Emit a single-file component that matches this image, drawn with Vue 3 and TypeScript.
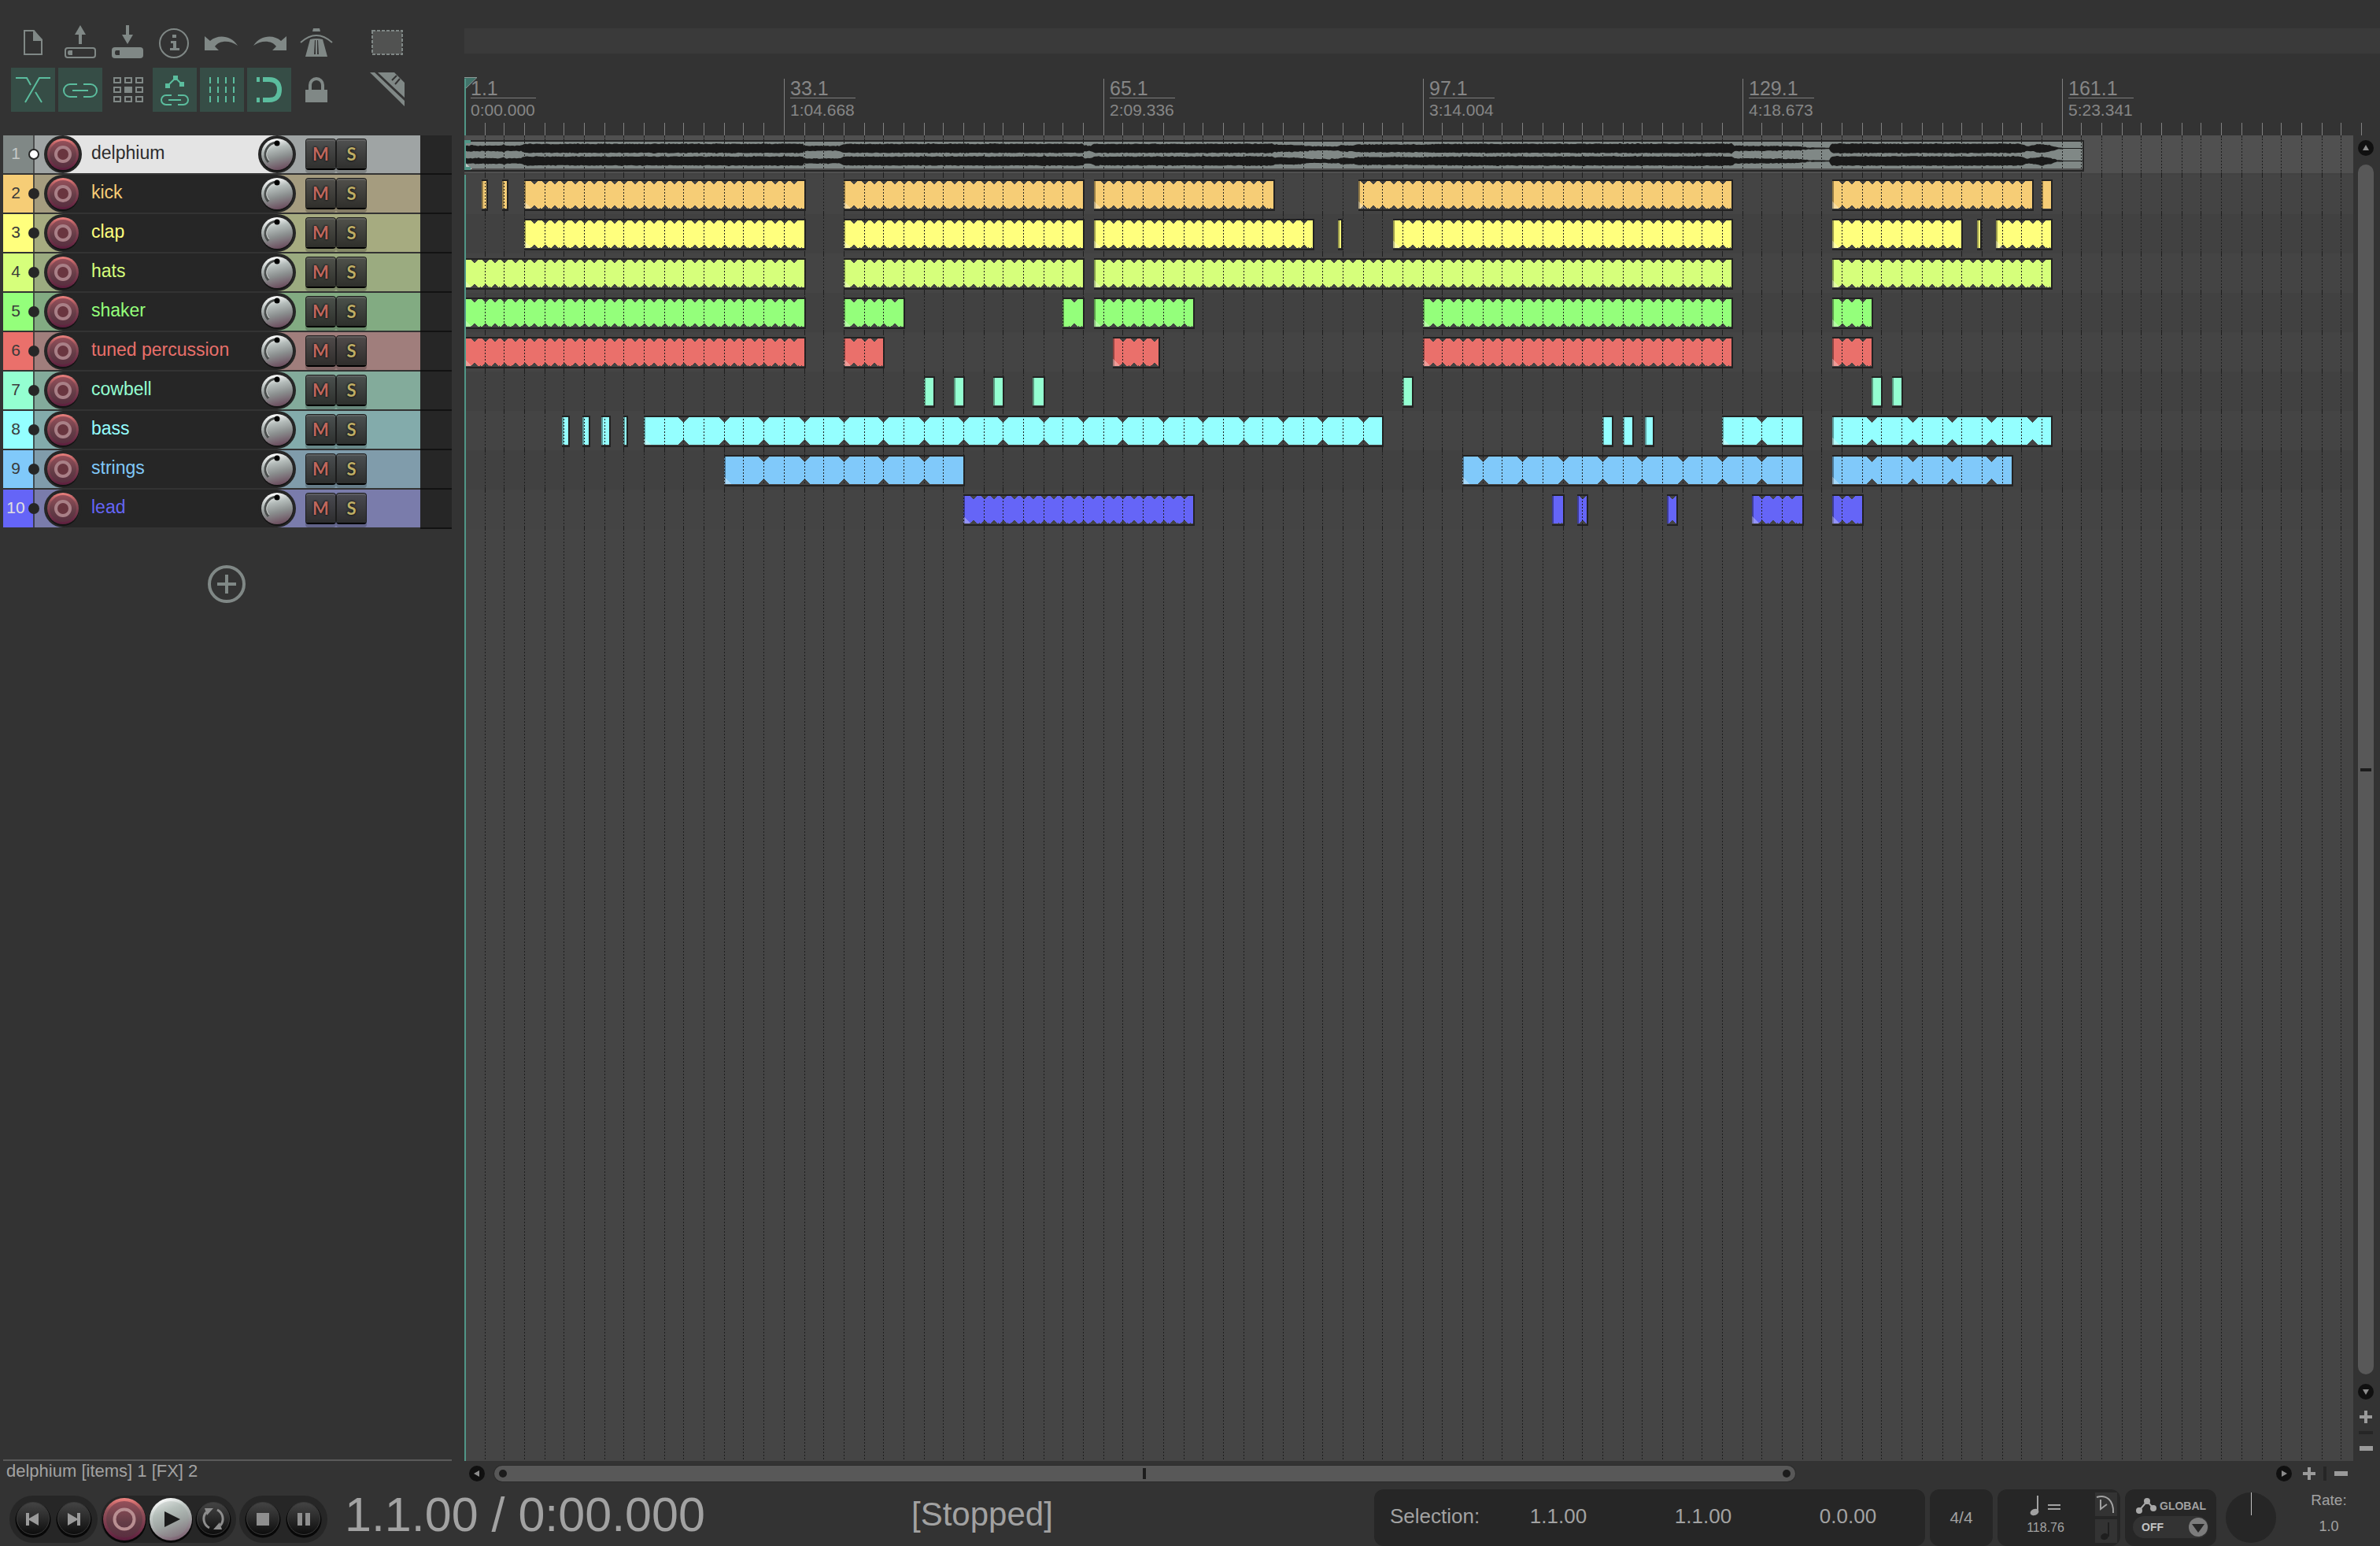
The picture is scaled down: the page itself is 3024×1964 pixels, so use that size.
<script setup lang="ts">
import { computed, ref } from 'vue'

type Clip = [start: number, end: number]

interface Track {
  name: string
  color: string
  body: string
  every: number
  phase: number
  clips: Clip[]
}

const tracks: Track[] = [
  { name: 'delphium', color: '#808886', body: '#9fa4a4', every: 0, phase: 0, clips: [] },
  {
    name: 'kick', color: '#f6cd76', body: '#a59c7f', every: 1, phase: 0,
    clips: [[1.75, 2.25], [3.8, 4.3], [6, 34], [38, 62], [63.02, 81], [89.5, 127], [137, 157], [158, 159]],
  },
  {
    name: 'clap', color: '#ffff7d', body: '#a6ab80', every: 1, phase: 0,
    clips: [[6, 34], [38, 62], [63.02, 85], [87.5, 87.9], [93, 127], [137, 150], [151.5, 151.9], [153.4, 159]],
  },
  {
    name: 'hats', color: '#d6ff7b', body: '#9bab80', every: 1, phase: 0,
    clips: [[0, 34], [38, 62], [63.02, 127], [137, 159]],
  },
  {
    name: 'shaker', color: '#94ff7b', body: '#82ab82', every: 1, phase: 0,
    clips: [[0, 34], [38, 44], [60, 62], [63.02, 73], [96, 127], [137, 141]],
  },
  {
    name: 'tuned percussion', color: '#ea706b', body: '#a07e7c', every: 1, phase: 0,
    clips: [[0, 34], [38, 42], [65, 69.5], [96, 127], [137, 141]],
  },
  {
    name: 'cowbell', color: '#94ffd1', body: '#83ab9b', every: 0, phase: 0,
    clips: [[46, 47], [49, 50], [53, 54], [57, 58], [94, 95], [141, 142], [143, 144]],
  },
  {
    name: 'bass', color: '#94ffff', body: '#83abab', every: 4, phase: 2,
    clips: [[9.8, 10.5], [11.8, 12.5], [13.8, 14.5], [15.9, 16.2], [18, 92], [114, 115], [116, 117], [118.25, 119], [126, 134], [137, 159]],
  },
  {
    name: 'strings', color: '#80c9fa', body: '#809cab', every: 4, phase: 2,
    clips: [[26, 50], [100, 134], [137, 155]],
  },
  {
    name: 'lead', color: '#6565f7', body: '#7a7cab', every: 1, phase: 0,
    clips: [[50, 73], [109, 110], [111.5, 112.4], [120.5, 121.5], [129, 134], [137, 140]],
  },
]

/* Bars are snapped to even device pixels so the grid stays crisp. */
const HALF_BAR = 6.34225
const barX = (bar: number): number => 2 * Math.floor(bar * HALF_BAR + 0.4)

const gridBars = Array.from({ length: 110 }, (_, i) => (i + 1) * 2)
const gridPath = gridBars.map((b) => `M${barX(b) + 0.5} 0V4000`).join('')
const lanePath = gridBars.map((b) => `M${barX(b) + 0.5} 0V500`).join('')
const tickPath = gridBars.filter((b) => b % 32 !== 0).map((b) => `M${barX(b) + 0.5} 60V76`).join('')

const marks = [
  { bar: 0, label: '1.1', time: '0:00.000' },
  { bar: 32, label: '33.1', time: '1:04.668' },
  { bar: 64, label: '65.1', time: '2:09.336' },
  { bar: 96, label: '97.1', time: '3:14.004' },
  { bar: 128, label: '129.1', time: '4:18.673' },
  { bar: 160, label: '161.1', time: '5:23.341' },
]

interface ClipShape {
  x: number
  w: number
  notches: string
  fade: boolean
  texture: boolean
}

function shapes(track: Track): ClipShape[] {
  const half = track.every === 4 ? 6 : 4
  const depth = track.every === 4 ? 7 : 4
  /* The bass part that starts at bar 137 and the strings there loop from their own start. */
  return track.clips.map(([start, end]) => {
    const x = barX(start)
    const w = barX(end) - x
    let notches = ''
    if (track.every) {
      const phase = track.every === 4 && start === 137 ? 1 : track.phase
      for (let bar = Math.ceil(start + 0.01); bar < end; bar++) {
        if (bar % track.every !== phase % track.every) continue
        if (bar - start < 0.4 || w < 12) continue
        const n = barX(bar)
        notches += `M${n - half} 8h${half * 2 + 1}l${-half} ${depth}h-1z`
        notches += `M${n - half} 43h${half * 2 + 1}l${-half} ${-depth}h-1z`
      }
    }
    return { x, w, notches, fade: w > 28, texture: track.every === 1 && w > 12 }
  })
}

const lanes = tracks.slice(1).map((t) => ({ track: t, clips: shapes(t) }))

/* Loudness envelope of the audio item: [x, amplitude]. */
const envelope: [number, number][] = [
  [0, 3.8], [46, 4], [50, 5], [54, 3.6], [72, 4], [76, 6], [430, 6.2], [432, 3.6], [476, 3.6], [482, 6],
  [786, 6.2], [788, 3.8], [797, 3.8], [799, 6], [1026, 6.2], [1030, 5], [1060, 4.6], [1078, 3], [1110, 3], [1114, 4.6],
  [1130, 4], [1134, 5.4], [1220, 5.4], [1240, 6], [1611, 6.3], [1614, 3.8], [1694, 3], [1716, 1], [1734, 0.8],
  [1737, 6.4], [1978, 6.2], [1986, 3.4], [2004, 5.8], [2014, 4.6], [2024, 1.6], [2032, 0.6], [2056, 0.6],
]

function amp(x: number): number {
  for (let i = 1; i < envelope.length; i++) {
    const [x0, a0] = envelope[i - 1]
    const [x1, a1] = envelope[i]
    if (x <= x1) return a0 + ((a1 - a0) * (x - x0)) / (x1 - x0)
  }
  return 0.5
}

function wave(center: number, seed: number): string {
  let s = seed
  const rnd = (): number => {
    s = (s * 1103515245 + 12345) % 2147483648
    return s / 2147483648
  }
  const top: string[] = []
  const bottom: string[] = []
  for (let x = 2; x <= 2056; x += 2) {
    const a = amp(x)
    const jitter = a > 1.2 ? 0.9 : 0
    const peak = rnd() > 0.9 ? 1 : 0
    top.push(`${x},${(center - a - peak * (jitter ? 0.6 : 0) + rnd() * jitter).toFixed(1)}`)
    bottom.unshift(`${x},${(center + a + peak * (jitter ? 0.6 : 0) - rnd() * jitter).toFixed(1)}`)
  }
  return [...top, ...bottom].join(' ')
}

const waveTop = wave(16.5, 7)
const waveBottom = wave(32.5, 91)

const selection = ref(['1.1.00', '1.1.00', '0.0.00'])
const signature = ref('4/4')
const tempo = ref('118.76')
const rate = ref('1.0')
const mode = ref('OFF')
const selected = ref(0)
const status = computed(() => `${tracks[selected.value].name} [items] 1 [FX] 2`)
</script>

<template>
  <div class="daw">
    <svg class="defs" width="0" height="0" aria-hidden="true">
      <defs>
        <linearGradient id="recFill" x1="0" y1="0" x2="0" y2="1">
          <stop offset="0" stop-color="#ee8480" />
          <stop offset=".14" stop-color="#c8686a" />
          <stop offset=".3" stop-color="#93525a" />
          <stop offset="1" stop-color="#5c1f3e" />
        </linearGradient>
        <linearGradient id="recInner" x1="0" y1="0" x2="0" y2="1">
          <stop offset="0" stop-color="#94505a" />
          <stop offset=".6" stop-color="#633c46" />
          <stop offset="1" stop-color="#5a2f40" />
        </linearGradient>
        <linearGradient id="knobFill" x1=".4" y1="0" x2=".65" y2="1">
          <stop offset="0" stop-color="#ffffff" />
          <stop offset=".3" stop-color="#b4bcba" />
          <stop offset=".6" stop-color="#8a8e8e" />
          <stop offset="1" stop-color="#6a4a5c" />
        </linearGradient>
        <linearGradient id="playFill" x1=".3" y1="0" x2=".7" y2="1">
          <stop offset="0" stop-color="#ffffff" />
          <stop offset=".3" stop-color="#c2cac6" />
          <stop offset=".6" stop-color="#a3a5a5" />
          <stop offset="1" stop-color="#7a5c6e" />
        </linearGradient>
        <linearGradient id="blackFill" x1="0" y1="0" x2="0" y2="1">
          <stop offset="0" stop-color="#444444" />
          <stop offset=".5" stop-color="#2a2a2a" />
          <stop offset="1" stop-color="#0c0c0c" />
        </linearGradient>
      </defs>
    </svg>

    <div class="workspace">
      <aside class="panel">
        <div class="toolbar">
          <div class="tools">
            <button class="tool" aria-label="New project">
              <svg viewBox="0 0 56 56"><path class="ln" d="M17 13H29L39 25V43H17Z" /><path class="fl" d="M28 12L40 24V26H28Z" /></svg>
            </button>
            <button class="tool" aria-label="Open project">
              <svg viewBox="0 0 56 56"><path class="fl" d="M28 6L35 18H30V30H26V18H21Z" /><rect class="ln" x="9" y="35" width="38" height="12" rx="3" /><path class="fl" d="M14 38H18V44H14Q12 44 12 41T14 38Z" /></svg>
            </button>
            <button class="tool" aria-label="Save project">
              <svg viewBox="0 0 56 56"><path class="fl" d="M28 30L35 18H30V6H26V18H21Z" /><rect class="fl" x="8" y="34" width="40" height="14" rx="4" /><path class="bg" d="M14 38H18V44H14Q12 44 12 41T14 38Z" /></svg>
            </button>
            <button class="tool" aria-label="Project settings">
              <svg viewBox="0 0 56 56"><circle class="ln" cx="27" cy="29" r="18" /><path class="fl" d="M25 18h5v4h-5zM23 26h7v9h4v3H22v-3h4v-6h-3z" /></svg>
            </button>
            <button class="tool" aria-label="Undo">
              <svg viewBox="0 0 56 56"><path class="fl" d="M6 20L13 26C22 18 39 18 48 32C38 25 25 25 19 33L24 38H6Z" /></svg>
            </button>
            <button class="tool" aria-label="Redo">
              <svg viewBox="0 0 56 56"><path class="fl" d="M50 20L43 26C34 18 17 18 8 32C18 25 31 25 37 33L32 38H50Z" /></svg>
            </button>
            <button class="tool" aria-label="Metronome">
              <svg viewBox="0 0 56 56"><path class="fl" d="M24 10H32L33 14H23Z" /><path class="ln" d="M8 28Q18 19 28 19T48 28" /><path class="fl" d="M20 24Q28 22 36 24L42 46H14Z" /><path class="bg" d="M26 25H30L31 43H25Z" /><path class="fl" d="M27 25H29V43H27Z" /></svg>
            </button>
            <button class="tool far" aria-label="Marquee selection">
              <svg viewBox="0 0 56 56"><rect x="9" y="13" width="38" height="30" fill="#515251" stroke="#808886" stroke-width="2" stroke-dasharray="4 2" /></svg>
            </button>
          </div>
          <div class="tools">
            <button class="tool on" aria-label="Auto crossfade">
              <svg viewBox="0 0 56 56"><path class="ln" d="M6 13H20L25 22M50 13H36L18 44M31 31L39 44" /></svg>
            </button>
            <button class="tool on" aria-label="Item grouping">
              <svg viewBox="0 0 56 56"><path class="ln" d="M24 21H15A8 8 0 0 0 15 37H24M32 21H41A8 8 0 0 1 41 37H32M18 29H38" /></svg>
            </button>
            <button class="tool" aria-label="Ripple editing">
              <svg viewBox="0 0 56 56"><path class="ln" d="M11 13h8v6h-8zM25 13h8v6h-8zM39 13h8v6h-8zM11 25h8v6h-8zM39 25h8v6h-8zM11 37h8v6h-8zM25 37h8v6h-8zM39 37h8v6h-8z" /><path class="fl" d="M24 24h10v8H24z" /></svg>
            </button>
            <button class="tool on" aria-label="Move envelopes with items">
              <svg viewBox="0 0 56 56"><path class="fl" d="M26 10h6v6h-6zM16 20h6v6h-6zM34 18h6v6h-6z" /><path class="ln" d="M19 23L29 13L37 21M24 35H17A6 6 0 0 0 17 47H24M32 35H39A6 6 0 0 1 39 47H32M20 41H36" /></svg>
            </button>
            <button class="tool on" aria-label="Grid lines">
              <svg viewBox="0 0 56 56"><path class="ln" d="M13 12V44M23 12V44M33 12V44M43 12V44" stroke-dasharray="8 4" /></svg>
            </button>
            <button class="tool on" aria-label="Snap">
              <svg viewBox="0 0 56 56"><path d="M20 15H28C37 15 41 20 41 28S37 41 28 41H20" fill="none" stroke="#5bbd9e" stroke-width="6" /><path class="fl" d="M12 12h4v6h-4zM12 38h4v6h-4z" /></svg>
            </button>
            <button class="tool" aria-label="Locking">
              <svg viewBox="0 0 56 56"><path class="fl" d="M14 28H42V44H14Z" /><path d="M20 28V22A8 8 0 0 1 36 22V28" fill="none" stroke="#808886" stroke-width="4" /></svg>
            </button>
            <button class="tool far" aria-label="Ruler options">
              <svg viewBox="0 0 56 56"><path class="fl" d="M6 6H12L50 42V49ZM16 6H37L50 19V38Z" /><path d="M34 16L40 10M38 21L44 14" fill="none" stroke="#333" stroke-width="2" /></svg>
            </button>
          </div>
        </div>

        <ul class="tracks">
          <li v-for="(t, i) in tracks" :key="t.name" class="track" :class="{ sel: i === selected }">
            <span class="num" :class="{ pale: i === 0 || i === 9 }" :style="{ background: t.color }">{{ i + 1 }}</span>
            <div class="body" :style="{ background: t.body }">
              <i class="node"></i>
              <div class="strip">
                <button class="round" :aria-label="`Record arm ${t.name}`">
                  <svg viewBox="0 0 48 48">
                    <circle cx="24" cy="24" r="24" fill="#262626" />
                    <circle cx="24" cy="26" r="20" fill="#141414" />
                    <circle cx="24" cy="24" r="20" fill="url(#recFill)" />
                    <circle cx="24" cy="24" r="17" fill="url(#recInner)" />
                    <circle cx="24" cy="24" r="9" fill="#69353f" stroke="#a98087" stroke-width="4" />
                  </svg>
                </button>
                <span class="name" :style="{ color: i === selected ? '#2c2c2c' : t.color }">{{ t.name }}</span>
                <button class="round" :aria-label="`Volume ${t.name}`">
                  <svg viewBox="0 0 48 48">
                    <circle cx="24" cy="24" r="24" fill="#262626" />
                    <circle cx="24" cy="26" r="20" fill="#141414" />
                    <circle cx="24" cy="24" r="20" fill="url(#knobFill)" />
                    <path d="M24 9A15 15 0 0 0 13 34" fill="none" stroke="#4a4e4d" stroke-width="3" />
                    <path d="M24 12A12 12 0 0 0 14 32" fill="none" stroke="#cfd4d2" stroke-width="1" />
                    <circle cx="24" cy="10" r="3.5" fill="#000" />
                  </svg>
                </button>
              </div>
              <div class="ms">
                <button class="key mute" :aria-label="`Mute ${t.name}`">M</button>
                <button class="key solo" :aria-label="`Solo ${t.name}`">S</button>
              </div>
            </div>
            <div class="meter"></div>
          </li>
        </ul>

        <button class="add" aria-label="Add track">
          <svg viewBox="0 0 48 48"><circle cx="24" cy="24" r="22" /><path d="M12 24H36M24 12V36" /></svg>
        </button>
        <p class="status">{{ status }}</p>
      </aside>

      <main class="arrange">
        <div class="regions"></div>
        <svg class="ruler" width="100%" height="76">
          <path :d="tickPath" stroke="#808080" />
          <template v-for="m in marks" :key="m.bar">
            <path v-if="m.bar" :d="`M${barX(m.bar) + 0.5} 4V76`" stroke="#808080" />
            <path :d="`M${barX(m.bar) + 8} 28.5h83`" stroke="#7c7c7c" />
            <text class="bar" :x="barX(m.bar) + 8" y="25">{{ m.label }}</text>
            <text class="time" :x="barX(m.bar) + 8" y="51">{{ m.time }}</text>
          </template>
          <path d="M0 2H16L1 17Z" fill="#41736a" />
          <path d="M0 2.5H16L1 17" fill="none" stroke="#8b9a97" />
          <path d="M0 4H2V76H0Z" fill="#519687" />
        </svg>

        <div class="view">
          <div class="timeline">
            <svg class="lane first" width="100%" height="50">
              <rect x="0" y="6" width="2058" height="40" fill="#262626" />
              <rect x="0" y="8" width="2056" height="34" fill="#808886" />
              <rect x="0" y="42" width="2056" height="2" fill="#505050" />
              <polygon :points="waveTop" fill="#1a1a1a" />
              <polygon :points="waveBottom" fill="#1a1a1a" />
              <path d="M0 34L10 43H0Z" fill="#c4c8c7" />
              <path d="M0 6H8V10H2V40H8V44H0Z" fill="#519687" />
            </svg>
            <svg v-for="lane in lanes" :key="lane.track.name" class="lane" width="100%" height="50" shape-rendering="crispEdges">
              <g v-for="c in lane.clips" :key="c.x">
                <rect :x="c.x" y="6" :width="c.w + 2" height="40" fill="#222222" />
                <rect :x="c.x" y="8" :width="c.w" height="36" fill="#444444" />
                <rect :x="c.x" y="8" :width="c.w" height="35" :fill="lane.track.color" />
                <path :d="c.notches" fill="#444444" />
                <path v-if="c.texture" :d="`M${c.x + 8} 42.5h${c.w - 8}`" stroke="#444444" stroke-dasharray="1 3" />
                <rect v-if="c.x" :x="c.x" y="8" width="2" height="35" fill="#000" opacity=".4" />
                <path v-if="c.fade" :d="`M${c.x} 34L${c.x + 9} 43H${c.x}Z`" fill="#fff" opacity=".3" />
              </g>
            </svg>
            <svg class="grid" width="100%" height="100%" aria-hidden="true">
              <path :d="gridPath" stroke="#1e1e1e" stroke-dasharray="2 2" fill="none" />
              <path :d="lanePath" stroke="#1e1e1e" stroke-dasharray="3 44 3 0" fill="none" />
            </svg>
            <i class="playhead"></i>
          </div>
          <div class="vbar">
            <button class="dot" aria-label="Scroll up"><svg viewBox="0 0 20 20"><path d="M10 6L14 13H6Z" /></svg></button>
            <div class="vthumb"><i></i></div>
            <button class="dot" aria-label="Scroll down"><svg viewBox="0 0 20 20"><path d="M10 14L14 7H6Z" /></svg></button>
            <button class="zoom" aria-label="Zoom in vertically"><svg viewBox="0 0 20 20"><path d="M8 2h4v6h6v4h-6v6H8v-6H2V8h6z" /></svg></button>
            <i class="sep"></i>
            <button class="zoom" aria-label="Zoom out vertically"><svg viewBox="0 0 20 20"><path d="M2 7h17v6H2z" /></svg></button>
          </div>
        </div>

        <div class="hbar">
          <button class="dot" aria-label="Scroll left"><svg viewBox="0 0 20 20"><path d="M6 10L13 6V14Z" /></svg></button>
          <div class="htrack">
            <div class="hthumb"><i></i></div>
          </div>
          <button class="dot" aria-label="Scroll right"><svg viewBox="0 0 20 20"><path d="M14 10L7 6V14Z" /></svg></button>
          <button class="zoom" aria-label="Zoom in horizontally"><svg viewBox="0 0 20 20"><path d="M8 2h4v6h6v4h-6v6H8v-6H2V8h6z" /></svg></button>
          <i class="sep"></i>
          <button class="zoom" aria-label="Zoom out horizontally"><svg viewBox="0 0 20 20"><path d="M2 7h17v6H2z" /></svg></button>
        </div>
      </main>
    </div>

    <footer class="transport">
      <div class="pill">
        <button class="small" aria-label="Go to start">
          <svg viewBox="0 0 46 46"><circle cx="23" cy="24" r="22.5" fill="#080808" /><circle cx="23" cy="22" r="20.5" fill="url(#blackFill)" stroke="#3a3a3a" /><path fill="#9a9a9a" d="M14 15h4v7l12-7v16l-12-7v7h-4z" /></svg>
        </button>
        <button class="small" aria-label="Go to end">
          <svg viewBox="0 0 46 46"><circle cx="23" cy="24" r="22.5" fill="#080808" /><circle cx="23" cy="22" r="20.5" fill="url(#blackFill)" stroke="#3a3a3a" /><path fill="#9a9a9a" d="M31 15h-4v7l-12-7v16l12-7v7h4z" /></svg>
        </button>
      </div>
      <div class="pill mid">
        <button class="large" aria-label="Record">
          <svg viewBox="0 0 56 56"><circle cx="28" cy="30" r="28" fill="#080808" /><circle cx="28" cy="28" r="27" fill="url(#recFill)" /><circle cx="28" cy="28" r="23" fill="url(#recInner)" /><circle cx="28" cy="28" r="12.5" fill="none" stroke="#b98f92" stroke-width="4" /></svg>
        </button>
        <button class="large" aria-label="Play">
          <svg viewBox="0 0 56 56"><circle cx="28" cy="30" r="28" fill="#080808" /><circle cx="28" cy="28" r="27" fill="url(#playFill)" /><circle cx="28" cy="28" r="23" fill="#8a9a92" opacity=".25" /><path fill="#1c1c1c" d="M20 18L40 28L20 38Z" /></svg>
        </button>
        <button class="small" aria-label="Repeat">
          <svg viewBox="0 0 46 46"><circle cx="23" cy="24" r="22.5" fill="#080808" /><circle cx="23" cy="22" r="20.5" fill="url(#blackFill)" stroke="#3a3a3a" /><path fill="none" stroke="#8e8e8e" stroke-width="3" d="M18 34A13 13 0 0 1 14 14M28 11A13 13 0 0 1 32 31" /><path fill="#8e8e8e" d="M12 9h11l-8 9zM34 36H23l8-9z" /></svg>
        </button>
      </div>
      <div class="pill">
        <button class="small" aria-label="Stop">
          <svg viewBox="0 0 46 46"><circle cx="23" cy="24" r="22.5" fill="#080808" /><circle cx="23" cy="22" r="20.5" fill="url(#blackFill)" stroke="#3a3a3a" /><path fill="#8e8e8e" d="M15 15h16v16H15z" /></svg>
        </button>
        <button class="small" aria-label="Pause">
          <svg viewBox="0 0 46 46"><circle cx="23" cy="24" r="22.5" fill="#080808" /><circle cx="23" cy="22" r="20.5" fill="url(#blackFill)" stroke="#3a3a3a" /><path fill="#8e8e8e" d="M15 15h6v16h-6zM25 15h6v16h-6z" /></svg>
        </button>
      </div>

      <output class="clock">1.1.00 / 0:00.000</output>
      <output class="state">[Stopped]</output>

      <div class="box selection">
        <label for="sel0">Selection:</label>
        <input v-for="(_, i) in selection" :id="`sel${i}`" :key="i" v-model="selection[i]" type="text" aria-label="Selection" />
      </div>
      <div class="box signature">
        <input v-model="signature" type="text" aria-label="Time signature" />
      </div>
      <div class="box tempo">
        <div class="bpm">
          <label for="bpm" aria-label="Tempo">
            <svg viewBox="0 0 40 26" width="40" height="26"><ellipse cx="6" cy="21" rx="5.5" ry="4" fill="#a2a2a2" transform="rotate(-20 6 21)" /><path d="M10 0V21" stroke="#a2a2a2" stroke-width="2" /><path d="M23 12H39M23 17H39" stroke="#a2a2a2" stroke-width="2" /></svg>
          </label>
          <input id="bpm" v-model="tempo" type="text" />
        </div>
        <div class="marks">
          <button aria-label="Tempo envelope"><svg viewBox="0 0 28 30"><path d="M2 6C14 2 24 10 23 26" fill="none" stroke="#a2a2a2" stroke-width="2" /><path d="M7 9V21L15 15" fill="none" stroke="#a2a2a2" stroke-width="2" /></svg></button>
          <button aria-label="Tap tempo"><svg viewBox="0 0 28 30"><ellipse cx="12" cy="22" rx="5" ry="4" fill="#1f1f1f" transform="rotate(-20 12 22)" /><path d="M17 4V22" stroke="#1f1f1f" stroke-width="2" /></svg></button>
        </div>
      </div>
      <div class="box global">
        <label for="mode">
          <svg viewBox="0 0 26 22" width="26" height="22"><path d="M4 17L14 5L22 14" fill="none" stroke="#a8a8a8" stroke-width="2" /><circle cx="4" cy="17" r="4" /><circle cx="14" cy="5" r="4" /><circle cx="22" cy="14" r="4" /></svg>
          GLOBAL
        </label>
        <div class="drop">
          <select id="mode" v-model="mode">
            <option>OFF</option>
            <option>READ</option>
            <option>TOUCH</option>
          </select>
          <svg viewBox="0 0 24 24" width="24" height="24"><circle cx="12" cy="12" r="12" fill="#7c7c7c" /><path d="M4 8H20L12 19Z" fill="#262626" /></svg>
        </div>
      </div>
      <button class="dial" aria-label="Playback rate"><i></i></button>
      <div class="rate">
        <label for="rate">Rate:</label>
        <input id="rate" v-model="rate" type="text" />
      </div>
    </footer>
  </div>
</template>

<style>
body {
  margin: 0;
  background: #333333;
}
</style>

<style scoped>
.daw {
  display: flex;
  flex-direction: column;
  height: 100vh;
  overflow: hidden;
  background: #333333;
  color: #a2a2a2;
  font-family: "Liberation Sans", Arial, Helvetica, sans-serif;
}
.defs {
  position: absolute;
}
button,
input,
select {
  margin: 0;
  padding: 0;
  border: 0;
  background: none;
  color: inherit;
  font-family: inherit;
  appearance: none;
}
button svg {
  display: block;
  width: 100%;
  height: 100%;
}
.workspace {
  flex: 1;
  min-height: 0;
  display: flex;
}

/* track control panel */
.panel {
  flex: none;
  width: 590px;
  display: flex;
  flex-direction: column;
}
.toolbar {
  display: flex;
  flex-direction: column;
  gap: 4px;
  padding: 26px 14px 30px;
}
.tools {
  display: flex;
  gap: 4px;
}
.tool {
  width: 56px;
  height: 56px;
}
.tool.far {
  margin-left: 30px;
}
.tool .ln {
  fill: none;
  stroke: #808886;
  stroke-width: 2;
}
.tool .fl {
  fill: #808886;
}
.tool .bg {
  fill: #333333;
}
.tool.on {
  background: #364d46;
}
.tool.on .ln {
  stroke: #5bbd9e;
}
.tool.on .fl {
  fill: #5bbd9e;
}
.tracks {
  list-style: none;
  margin: 0 16px 0 4px;
  padding: 0;
}
.track {
  display: flex;
  height: 50px;
}
.num {
  width: 38px;
  height: 48px;
  box-sizing: border-box;
  padding-right: 6px;
  line-height: 45px;
  font-size: 21px;
  text-align: center;
  color: #3a3a3a;
}
.num.pale {
  color: #e0e0e0;
}
.sel .num.pale {
  color: #c4c8c6;
}
.body {
  position: relative;
  flex: 1;
  height: 48px;
  display: flex;
  align-items: center;
  border-left: 2px solid rgba(20, 20, 20, 0.6);
  padding-left: 12px;
}
.node {
  position: absolute;
  left: -8px;
  top: 17px;
  width: 14px;
  height: 14px;
  border-radius: 50%;
  background: #262626;
}
.sel .node {
  width: 10px;
  height: 10px;
  border: 2px solid #262626;
  background: #ffffff;
}
.strip {
  width: 320px;
  height: 48px;
  display: flex;
  background: linear-gradient(90deg, transparent 24px, #262626 24px, #262626 296px, transparent 296px);
}
.sel .strip {
  background: linear-gradient(90deg, transparent 24px, #e4e4e4 24px, #e4e4e4 296px, transparent 296px);
}
.round {
  flex: none;
  width: 48px;
  height: 48px;
}
.name {
  flex: 1;
  padding-left: 12px;
  font-size: 23px;
  line-height: 45px;
  white-space: nowrap;
}
.ms {
  display: flex;
  margin-left: 12px;
}
.key {
  width: 39px;
  height: 40px;
  box-sizing: border-box;
  border: 1px solid #1c1c1c;
  border-bottom: 2px solid #000000;
  border-radius: 4px;
  background: linear-gradient(rgba(66, 66, 66, 0.85), rgba(40, 40, 38, 0.94));
  box-shadow: inset 0 2px 0 rgba(255, 255, 255, 0.1), 0 4px 0 rgba(0, 0, 0, 0.2);
  background-clip: padding-box;
  font-family: Lato, "Liberation Sans", sans-serif;
  font-size: 22px;
  font-weight: 700;
  line-height: 36px;
  text-shadow: 0 0 3px #111111, 0 0 2px #111111;
}
.mute {
  color: #c0675d;
}
.solo {
  color: #bdad66;
}
.meter {
  width: 40px;
  height: 48px;
  background: #262626;
  border-bottom: 2px solid #121212;
}
.add {
  width: 48px;
  height: 48px;
  margin: 46px auto 0 264px;
}
.add svg {
  fill: none;
  stroke: #808886;
  stroke-width: 4;
}
.status {
  margin: auto 16px 0 4px;
  height: 34px;
  border-top: 2px solid #5a5a5a;
  padding-left: 4px;
  font-size: 22px;
  line-height: 25px;
}

/* arrange view */
.arrange {
  flex: 1;
  min-width: 0;
  display: flex;
  flex-direction: column;
}
.regions {
  height: 32px;
  margin: 36px 0 28px;
  background: #3a3a3a;
}
.ruler {
  display: block;
  flex: none;
}
.bar {
  font-size: 25px;
  fill: #868686;
}
.time {
  font-size: 21px;
  fill: #868686;
}
.view {
  flex: 1;
  min-height: 0;
  display: flex;
}
.timeline {
  position: relative;
  flex: 1;
  min-width: 0;
  overflow: hidden;
  background: #454545;
}
.lane {
  display: block;
  background: #444444;
}
.lane:nth-of-type(odd) {
  background: #414141;
}
.lane.first {
  background: linear-gradient(#505050 48px, #424242 48px);
}
.grid {
  position: absolute;
  inset: 0;
}
.playhead {
  position: absolute;
  left: 0;
  top: 50px;
  bottom: 0;
  width: 2px;
  background: #519687;
}
.vbar {
  flex: none;
  width: 32px;
  padding: 6px 2px 6px 0;
  display: flex;
  flex-direction: column;
  align-items: center;
}
.dot,
.zoom {
  flex: none;
  width: 20px;
  height: 20px;
}
.dot {
  border-radius: 50%;
  background: #101010;
}
.dot path {
  fill: #8c8c8c;
}
.zoom path {
  fill: #9a9a9a;
}
.vthumb {
  flex: 1;
  width: 20px;
  margin: 11px 0 12px;
  border-radius: 10px;
  background: #585858;
  display: flex;
  align-items: center;
  justify-content: center;
}
.vthumb i {
  width: 14px;
  height: 4px;
  background: #1c1c1c;
}
.vbar .zoom:nth-of-type(3) {
  margin-top: 12px;
}
.vbar .sep {
  width: 18px;
  height: 4px;
  margin: 8px 0;
  background: #262626;
}
.hbar {
  height: 34px;
  box-sizing: border-box;
  display: flex;
  align-items: center;
  gap: 12px;
  padding: 0 40px 2px 6px;
}
.htrack {
  flex: 1;
  height: 20px;
}
.hthumb {
  width: 73.4%;
  height: 20px;
  box-sizing: border-box;
  border-radius: 10px;
  background: #585858;
  box-shadow: 0 0 0 1px #2c2c2c;
  display: flex;
  align-items: center;
  justify-content: center;
}
.hthumb::before,
.hthumb::after {
  content: "";
  width: 10px;
  height: 10px;
  border-radius: 50%;
  background: #1c1c1c;
}
.hthumb::before {
  margin: 0 auto 0 6px;
}
.hthumb::after {
  margin: 0 6px 0 auto;
}
.hthumb i {
  width: 4px;
  height: 14px;
  background: #1c1c1c;
}
.hbar .sep {
  width: 4px;
  height: 18px;
  margin: 0 -4px;
  background: #262626;
}

/* transport */
.transport {
  flex: none;
  height: 74px;
  display: flex;
  box-sizing: border-box;
  padding: 2px 20px 0 12px;
}
.pill {
  width: 112px;
  height: 60px;
  margin: 8px 0 0;
  box-sizing: border-box;
  border-radius: 30px;
  background: #262626;
  display: flex;
  align-items: center;
  justify-content: center;
  gap: 6px;
}
.pill.mid {
  width: 172px;
  margin: 8px 4px 0;
  padding-left: 2px;
  justify-content: flex-start;
  gap: 3px;
}
.small {
  width: 46px;
  height: 46px;
}
.large {
  width: 56px;
  height: 56px;
}
.small svg,
.large svg {
  overflow: visible;
}
.clock {
  margin-left: 22px;
  width: 470px;
  font-size: 61px;
  line-height: 64px;
  white-space: nowrap;
}
.state {
  margin: 0 auto 0 250px;
  font-size: 42px;
  line-height: 64px;
}
.box {
  display: flex;
  box-sizing: border-box;
  border-radius: 12px;
  background: #262626;
  margin-right: 6px;
}
.box input {
  min-width: 0;
  text-align: center;
}
.selection {
  width: 700px;
  padding: 0 6px 4px 20px;
  align-items: center;
  font-size: 26px;
}
.selection label {
  width: 122px;
  line-height: 68px;
}
.selection input {
  flex: 1;
  font-size: 26px;
  line-height: 68px;
}
.signature {
  width: 80px;
}
.signature input {
  width: 80px;
  font-size: 21px;
}
.tempo {
  width: 156px;
  justify-content: flex-end;
}
.bpm {
  width: 90px;
  display: flex;
  flex-direction: column;
  align-items: center;
  padding: 8px 8px 0 0;
}
.bpm label {
  height: 26px;
}
.bpm input {
  width: 80px;
  height: 20px;
  margin-top: 5px;
  font-size: 16px;
}
.marks {
  display: flex;
  flex-direction: column;
  gap: 4px;
  padding: 4px 4px 0 10px;
}
.marks button {
  width: 28px;
  height: 30px;
  background: #333333;
}
.global {
  width: 116px;
  padding: 8px 10px 0;
  flex-direction: column;
  font-weight: 700;
}
.global label {
  display: flex;
  align-items: center;
  gap: 4px;
  height: 26px;
  padding-left: 4px;
  font-size: 14px;
}
.global label svg {
  flex: none;
  fill: #a8a8a8;
}
.drop {
  position: relative;
  height: 28px;
  border-radius: 14px;
  background: #333333;
}
.drop select {
  width: 100%;
  height: 28px;
  padding-left: 11px;
  font-size: 14px;
  font-weight: 700;
  color: #c4c4c4;
}
.drop svg {
  position: absolute;
  right: 1px;
  top: 2px;
  pointer-events: none;
}
.dial {
  width: 64px;
  height: 64px;
  margin: 4px 0 0 6px;
  border-radius: 50%;
  background: #262626;
  display: flex;
  justify-content: center;
}
.dial i {
  width: 1px;
  height: 29px;
  background: #c0c0c0;
}
.rate {
  width: 90px;
  margin-left: 22px;
  display: flex;
  flex-direction: column;
  align-items: center;
  font-size: 19px;
}
.rate label {
  margin-top: 4px;
  line-height: 20px;
}
.rate input {
  width: 80px;
  margin-top: 13px;
  font-size: 18px;
  line-height: 20px;
  text-align: center;
}
</style>
